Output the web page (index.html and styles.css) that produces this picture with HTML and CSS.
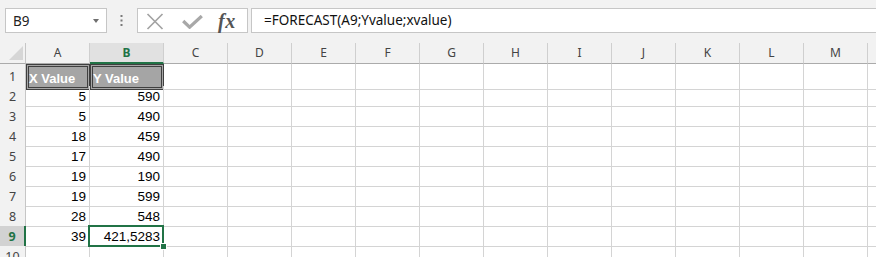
FILE: index.html
```html
<!DOCTYPE html>
<html lang="en">
<head>
    <meta charset="UTF-8">
    <title>FORECAST</title>
    <link rel="stylesheet" href="styles.css">
</head>
<body>
    <div class="formula-bar">
        <div class="name-box">
            <span>B9</span>
            <span class="caret"></span>
        </div>
        <div class="grip">
            <svg width="3" height="12" viewBox="0 0 3 12"><rect x="0.5" y="0" width="2" height="2" fill="#7a7a7a"/><rect x="0.5" y="4.5" width="2" height="2" fill="#7a7a7a"/><rect x="0.5" y="9" width="2" height="2" fill="#7a7a7a"/></svg>
        </div>
        <div class="fx-buttons">
            <svg class="icon-cancel" width="18" height="17" viewBox="0 0 18 17"><path d="M1.5 1 L16.5 16 M16.5 1 L1.5 16" stroke="#a3a3a3" stroke-width="1.7" fill="none"/></svg>
            <svg class="icon-enter" width="21" height="14" viewBox="0 0 21 14"><path d="M1.2 6 L7.6 12.2 L19.8 1" stroke="#a8a8a8" stroke-width="3.2" fill="none"/></svg>
            <span class="fx">fx</span>
        </div>
        <div class="formula-input">=FORECAST(A9;Yvalue;xvalue)</div>
    </div>

    <div class="sheet">
        <div class="row head">
            <div class="corner"><svg width="25" height="20" viewBox="0 0 25 20"><polygon points="23,3 23,17 9,17" fill="#d6d6d6"/></svg></div>
            <div>A</div><div class="sel-col">B</div><div>C</div><div>D</div><div>E</div><div>F</div><div>G</div><div>H</div><div>I</div><div>J</div><div>K</div><div>L</div><div>M</div><div></div>
        </div>
        <div class="row first">
            <div class="rh">1</div><div class="check">X Value</div><div class="check">Y Value</div>
            <div></div><div></div><div></div><div></div><div></div><div></div><div></div><div></div><div></div><div></div><div></div><div></div>
        </div>
        <div class="row">
            <div class="rh">2</div><div class="num">5</div><div class="num">590</div>
            <div></div><div></div><div></div><div></div><div></div><div></div><div></div><div></div><div></div><div></div><div></div><div></div>
        </div>
        <div class="row">
            <div class="rh">3</div><div class="num">5</div><div class="num">490</div>
            <div></div><div></div><div></div><div></div><div></div><div></div><div></div><div></div><div></div><div></div><div></div><div></div>
        </div>
        <div class="row">
            <div class="rh">4</div><div class="num">18</div><div class="num">459</div>
            <div></div><div></div><div></div><div></div><div></div><div></div><div></div><div></div><div></div><div></div><div></div><div></div>
        </div>
        <div class="row">
            <div class="rh">5</div><div class="num">17</div><div class="num">490</div>
            <div></div><div></div><div></div><div></div><div></div><div></div><div></div><div></div><div></div><div></div><div></div><div></div>
        </div>
        <div class="row">
            <div class="rh">6</div><div class="num">19</div><div class="num">190</div>
            <div></div><div></div><div></div><div></div><div></div><div></div><div></div><div></div><div></div><div></div><div></div><div></div>
        </div>
        <div class="row">
            <div class="rh">7</div><div class="num">19</div><div class="num">599</div>
            <div></div><div></div><div></div><div></div><div></div><div></div><div></div><div></div><div></div><div></div><div></div><div></div>
        </div>
        <div class="row">
            <div class="rh">8</div><div class="num">28</div><div class="num">548</div>
            <div></div><div></div><div></div><div></div><div></div><div></div><div></div><div></div><div></div><div></div><div></div><div></div>
        </div>
        <div class="row">
            <div class="rh sel-row">9</div><div class="num">39</div><div class="num">421,5283</div>
            <div></div><div></div><div></div><div></div><div></div><div></div><div></div><div></div><div></div><div></div><div></div><div></div>
        </div>
        <div class="row">
            <div class="rh">10</div><div></div><div></div>
            <div></div><div></div><div></div><div></div><div></div><div></div><div></div><div></div><div></div><div></div><div></div><div></div>
        </div>

        <!-- active cell B9 -->
        <div class="selection"><span class="handle"></span></div>
    </div>
</body>
</html>
```

FILE: styles.css
```css
html, body {
    margin: 0;
    padding: 0;
}
body {
    width: 876px;
    height: 257px;
    overflow: hidden;
    background-color: #f2f2f2;
    font-family: "Segoe UI", "Noto Sans", sans-serif;
    color: #222;
}

/* formula bar */
.formula-bar {
    height: 43px;
    box-sizing: border-box;
    padding: 8px 0 0 5px;
    display: flex;
    align-items: flex-start;
}
.name-box {
    width: 102px;
    height: 25px;
    box-sizing: border-box;
    background-color: #fff;
    border: 1px solid #c6c6c6;
    display: flex;
    align-items: center;
    justify-content: space-between;
    padding: 0 7px 0 7px;
    font-size: 13.5px;
}
.caret {
    width: 0;
    height: 0;
    border-left: 3.5px solid transparent;
    border-right: 3.5px solid transparent;
    border-top: 4px solid #6f6f6f;
    margin-top: 1px;
}
.grip {
    width: 30px;
    height: 25px;
    display: flex;
    align-items: center;
    justify-content: center;
}
.grip svg {
    margin-left: -1px;
    margin-top: 1px;
}
.fx-buttons {
    width: 111px;
    height: 25px;
    box-sizing: border-box;
    background-color: #fff;
    border: 1px solid #c6c6c6;
    display: flex;
    align-items: center;
}
.icon-cancel {
    margin-left: 8px;
    margin-top: 1px;
}
.icon-enter {
    margin-left: 18px;
    margin-top: 3px;
}
.fx {
    margin-left: 15px;
    font-family: "Liberation Serif", serif;
    font-style: italic;
    font-weight: bold;
    font-size: 20px;
    color: #555;
    letter-spacing: 0.5px;
    line-height: 1;
}
.formula-input {
    flex: 1;
    height: 25px;
    box-sizing: border-box;
    margin-left: 3px;
    background-color: #fff;
    border: 1px solid #c6c6c6;
    border-right: none;
    padding-left: 12px;
    font-size: 13.5px;
    line-height: 22px;
    color: #111;
}

/* grid */
.sheet {
    position: relative;
    background-color: #fff;
    overflow: hidden;
}
.row {
    display: grid;
    grid-template-columns: 26px 64px 74px repeat(12, 64px);
    height: 20px;
}
.row > div {
    box-sizing: border-box;
    border-right: 1px solid #d4d4d4;
    border-bottom: 1px solid #d4d4d4;
    font-family: "Liberation Sans", Arial, sans-serif;
    font-size: 13.5px;
    line-height: 19px;
    padding-top: 1px;
    white-space: nowrap;
    color: #000;
}
.row.first {
    height: 22px;
}
.row.first > div {
    padding-top: 3px;
}

.row.head {
    height: 21px;
}
.row.head > div {
    background-color: #f2f2f2;
    border-right-color: #cfcfcf;
    border-bottom-color: #ababab;
    font-family: "Segoe UI", "Noto Sans", sans-serif;
    font-size: 12px;
    line-height: 20px;
    padding-top: 0;
    text-align: center;
    color: #444;
}
.row.head > .corner {
    border-right-color: #c6c6c6;
}
.corner svg {
    display: block;
}
.row.head > .sel-col {
    background-color: #e1e1e1;
    border-bottom: 2px solid #217346;
    color: #217346;
    font-weight: bold;
    line-height: 19px;
}

.row > .rh {
    background-color: #f2f2f2;
    border-right-color: #c6c6c6;
    font-family: "Segoe UI", "Noto Sans", sans-serif;
    font-size: 12.5px;
    text-align: center;
    color: #444;
}
.row > .rh.sel-row {
    background-color: #d2d2d2;
    border-right: 2px solid #217346;
    color: #217346;
    font-weight: bold;
}

.row > .num {
    text-align: right;
    padding-right: 3px;
}
.row > .check {
    background-color: #a5a5a5;
    border: 3px double #3f3f3f;
    color: #fff;
    font-weight: bold;
    font-size: 13px;
    line-height: 17px;
    padding: 0;
}

.selection {
    position: absolute;
    left: 88px;
    top: 182px;
    width: 76px;
    height: 22px;
    box-sizing: border-box;
    border: 2px solid #217346;
}
.handle {
    position: absolute;
    right: -5px;
    bottom: -5px;
    width: 7px;
    height: 7px;
    box-sizing: border-box;
    background-color: #217346;
    border: 1px solid #fff;
}
```
